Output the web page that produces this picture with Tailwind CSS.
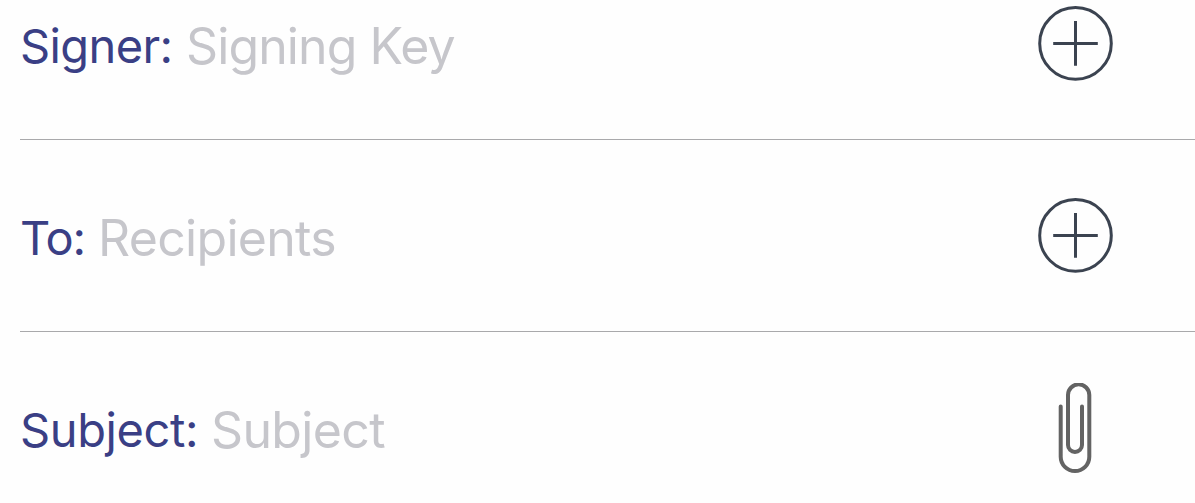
<!DOCTYPE html>
<html lang="en">
<head>
    <meta charset="UTF-8">
    <meta name="viewport" content="width=device-width, initial-scale=1.0">
    <title>Compose</title>
    <script src="https://cdn.jsdelivr.net/npm/@tailwindcss/browser@4"></script>
</head>
<body class="bg-[#fefefe] font-['Inter',sans-serif] overflow-hidden h-[503px]">
    <form class="pl-5">
        <!-- Signer -->
        <div class="h-[140px] border-b border-[#a9a9ab] flex items-start justify-between pr-[82px]">
            <div class="flex pt-4 whitespace-nowrap">
                <span class="w-[166px] text-[47px] leading-[60px] text-[#3a3f85] tracking-[-0.62px]">Signer:</span>
                <span class="text-[50px] leading-[60px] text-[#c6c6cb] tracking-[-0.9px]">Signing Key</span>
            </div>
            <svg class="mt-[6px]" width="75" height="75" viewBox="0 0 75 75" fill="none" stroke="#3b4350" stroke-width="3">
                <circle cx="37.5" cy="37.4" r="35.8"></circle>
                <path d="M37.5 15v44.7M15.2 37.5h44.6"></path>
            </svg>
        </div>

        <!-- Recipients -->
        <div class="h-[192px] border-b border-[#a9a9ab] flex items-start justify-between pr-[82px]">
            <div class="flex pt-[68px] whitespace-nowrap">
                <span class="w-[78px] text-[47px] leading-[60px] text-[#3a3f85] tracking-[-1.2px]">To:</span>
                <span class="text-[50px] leading-[60px] text-[#c6c6cb] tracking-[-0.7px]">Recipients</span>
            </div>
            <svg class="mt-[58px]" width="75" height="75" viewBox="0 0 75 75" fill="none" stroke="#3b4350" stroke-width="3">
                <circle cx="37.5" cy="37.4" r="35.8"></circle>
                <path d="M37.5 15v44.7M15.2 37.5h44.6"></path>
            </svg>
        </div>

        <!-- Subject -->
        <div class="flex items-start justify-between pr-[103px]">
            <div class="flex pt-[68px] whitespace-nowrap">
                <span class="w-[191px] text-[47px] leading-[60px] text-[#3a3f85] tracking-[-0.4px]">Subject:</span>
                <span class="text-[50px] leading-[60px] text-[#c6c6cb] tracking-[-0.65px]">Subject</span>
            </div>
            <svg class="mt-[51px]" width="34" height="92" viewBox="0 0 34 92" fill="none" stroke="#636363" stroke-width="4" stroke-linecap="round">
                <path d="M2.7 23.5V73.7a14.3 14.3 0 0 0 28.6 0V12a10.65 10.65 0 0 0-21.3 0v50a7 7 0 0 0 14 0V23.5"></path>
            </svg>
        </div>
    </form>
</body>
</html>
